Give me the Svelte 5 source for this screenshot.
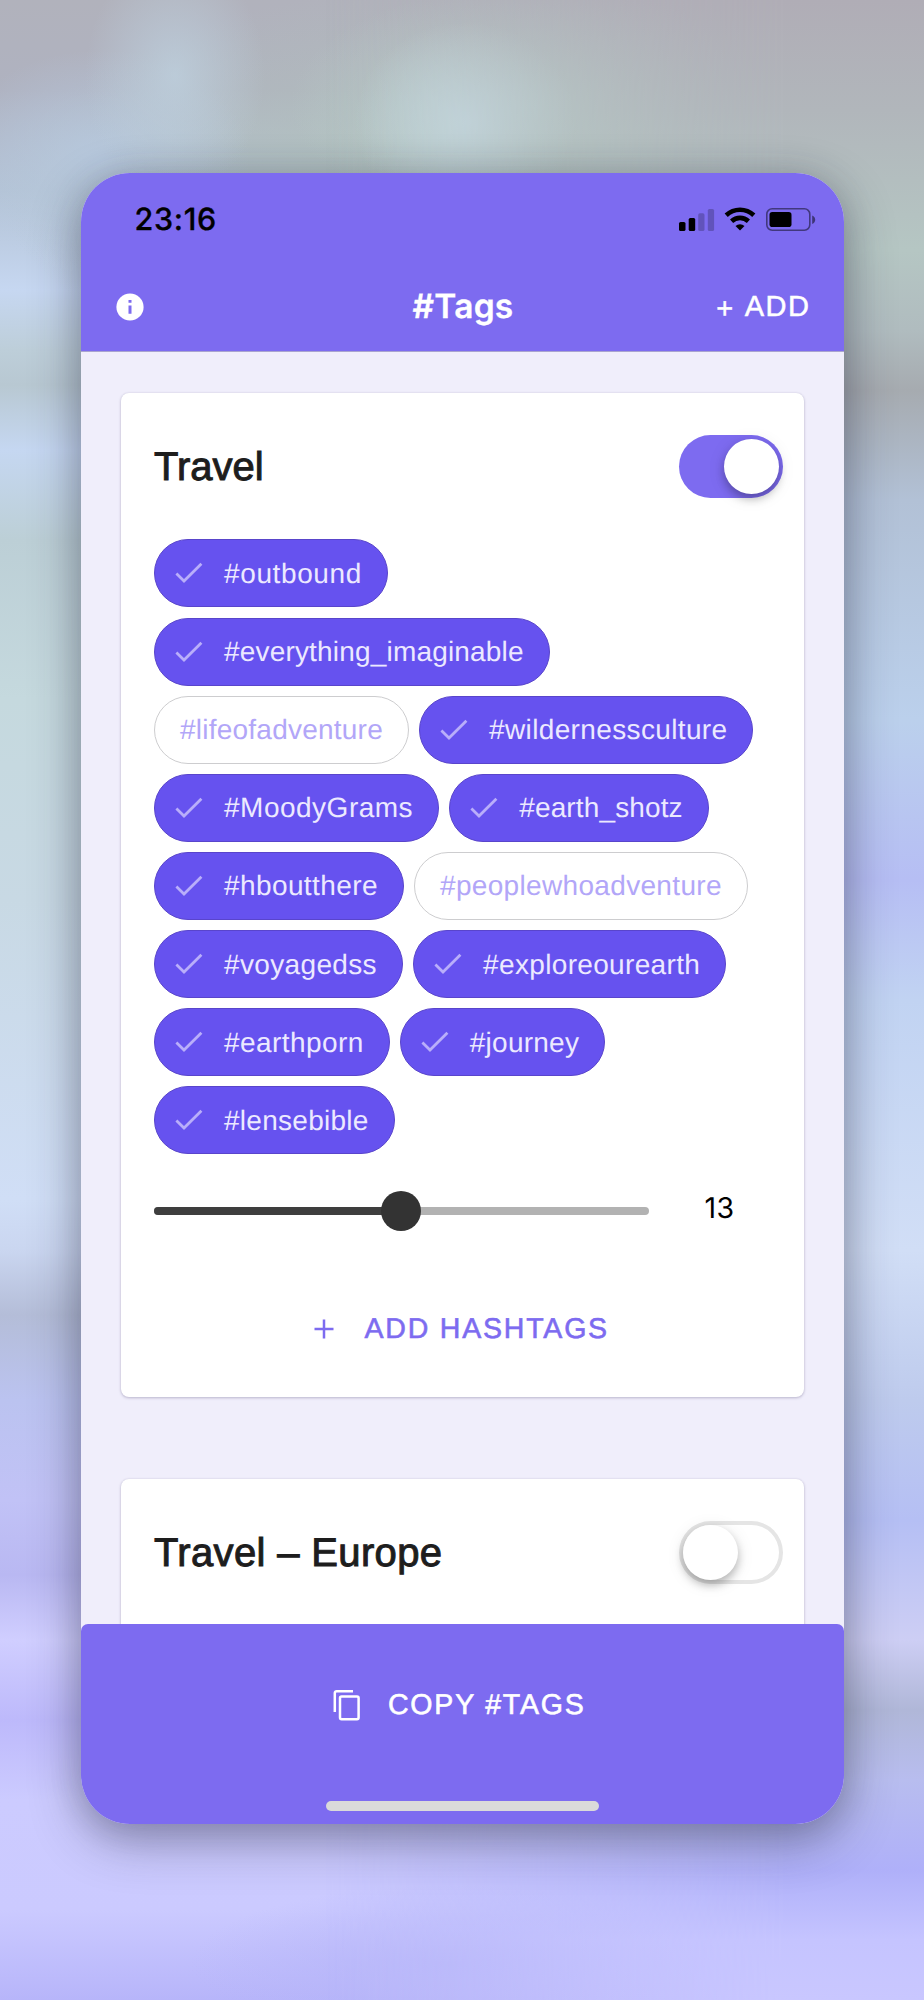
<script lang="ts">
	type Tag = { name: string; active: boolean; tracking: number };

	let tags: Tag[] = $state([
		{ name: 'outbound', active: true, tracking: 0.62 },
		{ name: 'everything_imaginable', active: true, tracking: 0.18 },
		{ name: 'lifeofadventure', active: false, tracking: 0.23 },
		{ name: 'wildernessculture', active: true, tracking: 0.36 },
		{ name: 'MoodyGrams', active: true, tracking: 0.5 },
		{ name: 'earth_shotz', active: true, tracking: 0.13 },
		{ name: 'hboutthere', active: true, tracking: 0.4 },
		{ name: 'peoplewhoadventure', active: false, tracking: 0.33 },
		{ name: 'voyagedss', active: true, tracking: 0.35 },
		{ name: 'exploreourearth', active: true, tracking: 0.34 },
		{ name: 'earthporn', active: true, tracking: 0.42 },
		{ name: 'journey', active: true, tracking: 0.25 },
		{ name: 'lensebible', active: true, tracking: 0.27 }
	]);
	let travel = $state(true);
	let europe = $state(false);
	let amount = $state(13);
	const max = 26;
</script>

{#snippet toggle(on: boolean, label: string, flip: () => void)}
	<button class="toggle" class:on role="switch" aria-checked={on} aria-label={label} onclick={flip}>
		<span class="knob"></span>
	</button>
{/snippet}

<div class="backdrop">
	<div class="phone">
		<header>
			<div class="status">
				<span class="time">23:16</span>
				<svg class="status-icons" width="138" height="26" viewBox="0 0 138 26">
					<rect x="1" y="15" width="6.5" height="9" rx="1.6" />
					<rect x="10.7" y="11" width="6.5" height="13" rx="1.6" />
					<rect x="20.2" y="6.3" width="6.3" height="17.7" rx="1.6" opacity="0.22" />
					<rect x="29.8" y="2" width="6.3" height="22" rx="1.6" opacity="0.22" />
					<g fill="none" stroke="#000" stroke-width="4.6">
						<path d="M48.2 8.2a20.2 20.2 0 0 1 27.6 0" />
						<path d="M53.6 14.2a12.3 12.3 0 0 1 16.8 0" />
					</g>
					<path d="M57.5 19a6.6 6.6 0 0 1 9 0L62 23.4z" />
					<rect x="88.8" y="1.8" width="43" height="21.4" rx="5.4" fill="none" stroke="#000" stroke-width="1.6" opacity="0.48" />
					<rect x="91.5" y="5" width="22" height="15" rx="2.8" />
					<path d="M134.2 8.4c4 1.5 4 7 0 8.5z" opacity="0.5" />
				</svg>
			</div>
			<nav>
				<svg class="info" width="28" height="28" viewBox="0 0 28 28">
					<circle cx="14" cy="14" r="13.6" fill="#fff" />
					<path d="M12.5 6.9h3v2.8h-3zM12.5 12.6h3v8.2h-3z" fill="#7d6bf0" />
				</svg>
				<h1>#Tags</h1>
				<button class="add"><span>+</span>ADD</button>
			</nav>
		</header>

		<main>
			<section class="card">
				<div class="title">
					<h2>Travel</h2>
					{@render toggle(travel, 'Travel', () => (travel = !travel))}
				</div>
				<div class="chips">
					{#each tags as tag (tag.name)}
						<button class="chip" class:active={tag.active} onclick={() => (tag.active = !tag.active)}>
							{#if tag.active}
								<svg width="28" height="22" viewBox="0 0 28 22">
									<path d="M1.4 11.6L9 19L26.4 1.8" />
								</svg>
							{/if}
							<span style="letter-spacing: {tag.tracking}px">#{tag.name}</span>
						</button>
					{/each}
				</div>
				<div class="amount">
					<div class="track">
						<div class="fill" style="width: {(amount / max) * 100}%"><i></i></div>
					</div>
					<span class="value">{amount}</span>
				</div>
				<button class="add-tags">
					<svg width="20" height="20" viewBox="0 0 20 20">
						<path d="M10 0.5v19M0.5 10h19" />
					</svg>
					<span>ADD HASHTAGS</span>
				</button>
			</section>

			<section class="card">
				<div class="title">
					<h2 class="wide">Travel – Europe</h2>
					{@render toggle(europe, 'Travel – Europe', () => (europe = !europe))}
				</div>
				<div class="chips"></div>
			</section>
		</main>

		<footer>
			<button class="copy">
				<svg width="28" height="32" viewBox="0 0 28 32">
					<path d="M1.8 23V4a1.8 1.8 0 0 1 1.8-1.8H20" />
					<rect x="7" y="7.4" width="18.6" height="22.8" rx="1.6" />
				</svg>
				<span>COPY #TAGS</span>
			</button>
			<div class="home-bar"></div>
		</footer>
	</div>
</div>

<style>
	:global(body) {
		margin: 0;
	}
	button {
		padding: 0;
		border: 0;
		background: none;
		font: inherit;
		color: inherit;
		text-rendering: inherit;
	}
	h1,
	h2 {
		margin: 0;
	}
	svg {
		display: block;
		flex: none;
	}

	.backdrop {
		position: relative;
		isolation: isolate;
		box-sizing: border-box;
		width: 924px;
		height: 2000px;
		padding: 173px 80.5px 0 81.5px;
		overflow: hidden;
		font-family: 'Liberation Sans', Arial, sans-serif;
		text-rendering: geometricPrecision;
		background:
			radial-gradient(ellipse 110px 100px at 465px 122px, #c7dde4, rgba(199, 221, 228, 0)),
			radial-gradient(ellipse 90px 120px at 175px 75px, rgba(190, 208, 222, 0.8), rgba(190, 208, 222, 0)),
			radial-gradient(ellipse 150px 110px at 100px 160px, rgba(184, 203, 226, 0.8), rgba(184, 203, 226, 0)),
			radial-gradient(ellipse 240px 120px at 530px 105px, #bad0cc, rgba(180, 204, 196, 0)),
			radial-gradient(ellipse 520px 210px at 520px 190px, #b2c3b9, rgba(178, 195, 185, 0)),
			radial-gradient(ellipse 260px 80px at 450px 1965px, rgba(181, 180, 248, 0.75), rgba(181, 180, 248, 0)),
			linear-gradient(
				#b1b2bc 0,
				#afb2c0 90px,
				#b3c2d4 190px,
				#c6d7f1 290px,
				#bdced9 350px,
				#b8c8d2 385px,
				#c5d7f1 450px,
				#bccfd6 540px,
				#c5d9de 700px,
				#c8d9e4 900px,
				#d0def6 1200px,
				#cad6f0 1250px,
				#b4bdd8 1315px,
				#bbc3f0 1400px,
				#c1c2f6 1500px,
				#b9b8f2 1575px,
				#d0ceff 1640px,
				#bdb9fb 1720px,
				#cccbff 1800px,
				#cbcaff 1910px,
				#b7b5fa 2000px
			);
	}
	.backdrop::before {
		content: '';
		position: absolute;
		inset: 0;
		z-index: -1;
		background: linear-gradient(
			#b0adb6 0,
			#b1b6bb 110px,
			#b5c6c3 250px,
			#b0bcbf 330px,
			#a6abb0 390px,
			#b2c1d6 500px,
			#bbd0ec 720px,
			#b6bef4 880px,
			#c1d3f2 1000px,
			#d1def6 1250px,
			#becbed 1400px,
			#b5bff4 1520px,
			#cdcef4 1640px,
			#b0b7d8 1710px,
			#b8bdef 1780px,
			#afb0f9 1870px,
			#c5c4ff 1940px,
			#c9c7ff 2000px
		);
		mask-image: linear-gradient(90deg, transparent 35%, #000 85%);
	}

	.phone {
		position: relative;
		display: flex;
		flex-direction: column;
		width: 762.5px;
		margin-left: -0.5px;
		height: 1651px;
		border-radius: 49px;
		overflow: hidden;
		background: #f0eefb;
		box-shadow:
			0 16px 50px rgba(35, 35, 60, 0.42),
			0 0 34px rgba(50, 60, 70, 0.14);
	}

	header {
		flex: none;
		height: 178px;
		background: #7d6bf0;
		border-bottom: 1px solid #a9a4cf;
		color: #fff;
	}
	.status {
		display: flex;
		justify-content: space-between;
		align-items: center;
		height: 94px;
		padding: 0 28px 0 53.5px;
		color: #000;
	}
	.time {
		margin-top: -1px;
		font: 500 30.5px Inter, sans-serif;
		letter-spacing: 0.7px;
		-webkit-text-stroke: 0.3px;
	}
	nav {
		display: grid;
		grid-template-columns: 1fr auto 1fr;
		align-items: center;
		height: 79px;
		padding: 0 33px 0 34.5px;
	}
	h1 {
		margin-top: 1px;
		font: 600 33.5px/40px Inter, sans-serif;
		letter-spacing: 0.2px;
		-webkit-text-stroke: 0.3px;
	}
	.add {
		display: flex;
		align-items: center;
		gap: 10px;
		justify-self: end;
		margin-top: 2px;
		font-size: 29px;
		letter-spacing: 1.5px;
		-webkit-text-stroke: 0.5px;
	}
	.add span {
		margin-top: 4px;
	}

	main {
		flex: 1;
		display: flex;
		flex-direction: column;
		gap: 82px;
		min-height: 0;
		padding: 41px 40px 0 40px;
		overflow: hidden;
	}
	.card {
		flex: none;
		box-sizing: border-box;
		padding: 42px 21px 36px 33px;
		border-radius: 8px;
		background: #fff;
		box-shadow:
			0 1px 3px rgba(60, 50, 100, 0.28),
			0 0 2px rgba(60, 50, 100, 0.1);
	}
	.title {
		display: flex;
		justify-content: space-between;
		align-items: center;
		height: 63px;
	}
	h2 {
		margin-top: 2px;
		font-size: 40px;
		font-weight: 400;
		color: #1d1d1d;
		-webkit-text-stroke: 1px;
	}
	h2.wide {
		letter-spacing: 0.35px;
	}
	.toggle {
		box-sizing: border-box;
		width: 104px;
		height: 63px;
		padding: 4px;
		border-radius: 32px;
		box-shadow: inset 0 0 0 4px #e5e5e5;
	}
	.toggle.on {
		background: #7d6bf0;
		box-shadow: none;
	}
	.knob {
		display: block;
		width: 55px;
		height: 55px;
		border-radius: 50%;
		background: #fff;
		box-shadow:
			0 5px 8px rgba(0, 0, 0, 0.24),
			0 3px 18px rgba(0, 0, 0, 0.1);
	}
	.on .knob {
		margin-left: auto;
	}

	.chips {
		display: flex;
		flex-wrap: wrap;
		gap: 10.15px;
		margin-top: 41.4px;
	}
	.chip {
		display: flex;
		align-items: center;
		box-sizing: border-box;
		height: 68px;
		padding: 0 25px;
		border: 1px solid #cdcdcf;
		border-radius: 34px;
		font-size: 28px;
		color: #b2a6f8;
	}
	.chip span {
		margin-top: 1px;
	}
	.chip.active {
		gap: 21px;
		padding-left: 20px;
		border-color: #5945cb;
		background: #6652ef;
		color: #ece9ff;
	}
	.chip path {
		fill: none;
		stroke: #b9aefa;
		stroke-width: 2.8;
	}

	.amount {
		display: flex;
		align-items: center;
		height: 40px;
		margin-top: 36.6px;
	}
	.track {
		width: 494.5px;
		height: 8px;
		border-radius: 4px;
		background: #b2b2b2;
	}
	.fill {
		display: flex;
		justify-content: flex-end;
		align-items: center;
		height: 100%;
		border-radius: 4px;
		background: #3e3e3e;
	}
	.fill i {
		flex: none;
		width: 40px;
		height: 40px;
		margin-right: -20px;
		border-radius: 50%;
		background: #333;
	}
	.value {
		margin: -6px 0 0 56px;
		font: 400 28.5px Inter, sans-serif;
		letter-spacing: 0.5px;
		color: #000;
	}
	.add-tags,
	.copy {
		display: flex;
		justify-content: center;
		align-items: center;
		width: 100%;
		font-size: 28.5px;
		letter-spacing: 1.8px;
		-webkit-text-stroke: 0.6px;
	}
	.add-tags span,
	.copy span {
		margin-top: 2px;
	}
	.add-tags {
		gap: 31px;
		height: 64px;
		margin-top: 66px;
		padding-right: 14px;
		color: #7d6bf0;
	}
	.add-tags path {
		stroke: #7d6bf0;
		stroke-width: 2.5;
	}

	footer {
		flex: none;
		display: flex;
		flex-direction: column;
		align-items: center;
		height: 200.5px;
		border-radius: 7px 7px 0 0;
		background: #7d6bf0;
		color: #fff;
	}
	.copy {
		gap: 27px;
		height: 64px;
		margin-top: 49px;
		padding-right: 6px;
	}
	.copy path,
	.copy rect {
		fill: none;
		stroke: #fff;
		stroke-width: 2.5;
	}
	.home-bar {
		width: 273px;
		height: 10px;
		margin-top: 64px;
		border-radius: 5px;
		background: #dadada;
	}
</style>
